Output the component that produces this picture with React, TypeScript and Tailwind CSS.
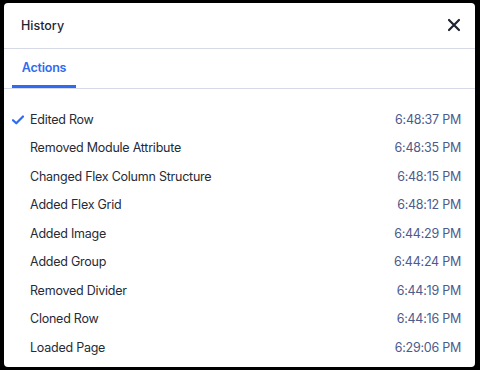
import React from "react";

const rows: [string, string][] = [
  ["Edited Row", "6:48:37 PM"],
  ["Removed Module Attribute", "6:48:35 PM"],
  ["Changed Flex Column Structure", "6:48:15 PM"],
  ["Added Flex Grid", "6:48:12 PM"],
  ["Added Image", "6:44:29 PM"],
  ["Added Group", "6:44:24 PM"],
  ["Removed Divider", "6:44:19 PM"],
  ["Cloned Row", "6:44:16 PM"],
  ["Loaded Page", "6:29:06 PM"],
];

export default function App() {
  return (
    <div
      className="w-[480px] h-[370px] bg-black pt-[3px] pl-[4px]"
      style={{ fontFamily: "Inter, 'Noto Sans', sans-serif" }}
    >
      <div className="w-[471px] h-[364px] bg-white rounded-[4px] flex flex-col overflow-hidden">
        <div className="h-[46px] pt-[2px] flex items-center justify-between pl-[17px] pr-[14px] border-b border-[#d6dae6]">
          <span className="text-[12.5px] font-medium text-[#1f2430]">History</span>
          <svg width="14" height="14" viewBox="0 0 14 14" className="mt-[-3px]">
            <path d="M2 2 L12 12 M12 2 L2 12" stroke="#1f2430" strokeWidth="2.2" strokeLinecap="round" />
          </svg>
        </div>
        <div className="h-[40px] flex border-b border-[#d6dae6]">
          <div className="ml-[8px] w-[64px] flex flex-col">
            <div className="flex-1 pt-[2px] flex items-center justify-center text-[12.5px] tracking-[-0.2px] font-semibold text-[#2f6bf0]">
              Actions
            </div>
            <div className="h-[3px] bg-[#2f6bf0]" />
          </div>
        </div>
        <div className="flex flex-col pt-[17px]">
          {rows.map(([label, time], i) => (
            <div key={i} className="h-[28.5px] flex items-center pr-[14px]">
              <div className="w-[26px] flex justify-end pr-[6px]">
                {i === 0 && (
                  <svg width="12" height="10" viewBox="0 0 12 10">
                    <path d="M1 5.2 L4.3 8.3 L11 1.5" fill="none" stroke="#2f6bf0" strokeWidth="2.2" strokeLinecap="round" strokeLinejoin="round" />
                  </svg>
                )}
              </div>
              <span className="flex-1 text-[12.5px] tracking-[-0.24px] text-[#262b36]">{label}</span>
              <span className="text-[12.5px] tracking-[-0.24px] text-[#4d5b8c]">{time}</span>
            </div>
          ))}
        </div>
      </div>
    </div>
  );
}
